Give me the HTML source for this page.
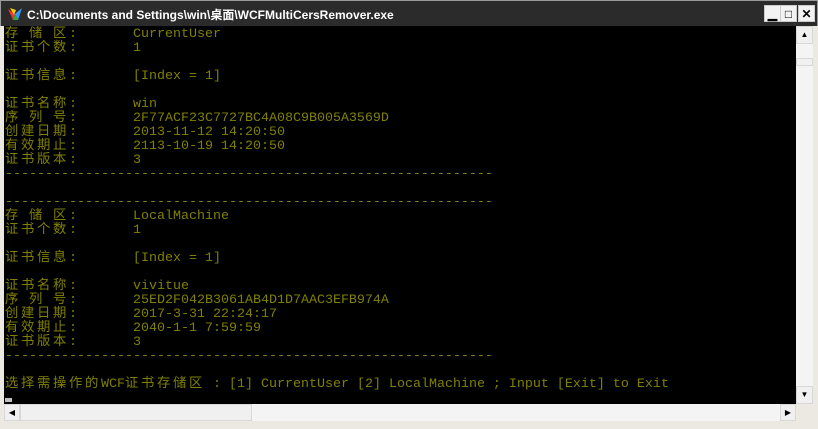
<!DOCTYPE html>
<html><head><meta charset="utf-8"><style>
*{margin:0;padding:0;box-sizing:border-box}
body{width:818px;height:429px;background:#ece9e2;position:relative;overflow:hidden;font-family:"Liberation Sans",sans-serif}
#title{position:absolute;left:0;top:0;width:818px;height:26px;background:#2b2b2b;border:1px solid #9a9a9a;border-bottom:none}
#title .t{position:absolute;left:26px;top:5px;color:#fff;font-weight:bold;font-size:12px;font-family:"Liberation Sans","Noto Sans CJK SC",sans-serif}
.btn{position:absolute;top:4px;width:17px;height:17px;background:#f2f2f2;border:1px solid #ccc;font-size:12px;font-weight:bold;text-align:center;line-height:16px;color:#000}
#con{position:absolute;left:4px;top:26px;width:792px;height:378px;background:#000;overflow:hidden}
pre{position:absolute;left:1px;top:2px;font-family:"Liberation Mono","Noto Sans CJK SC",monospace;font-size:13.33px;line-height:14px;color:#808000;white-space:pre}
i{font-style:normal;display:inline-block;width:16px;text-align:left}
#vs{position:absolute;left:796px;top:26px;width:17px;height:378px;background:#f4f4f4}
#hs{position:absolute;left:4px;top:404px;width:792px;height:17px;background:#f4f4f4}
.sb{position:absolute;background:#f0f0f0;border:1px solid #d8d8d8;font-size:8px;text-align:center;color:#000}
</style></head><body>
<div id="title"><svg style="position:absolute;left:6px;top:5px" width="16" height="16"><path d="M1 3 L6 14 L8 8Z" fill="#e33"/><path d="M6 14 L8 8 L11 14Z" fill="#3a3"/><path d="M8 8 L15 2 L11 14Z" fill="#39f"/><path d="M3 2 L7 9 L9 4Z" fill="#fc0"/></svg><span class="t">C:\Documents and Settings\win\桌面\WCFMultiCersRemover.exe</span>
<div class="btn" style="left:763px">&#9601;</div><div class="btn" style="left:779px">&#9633;</div><div class="btn" style="left:797px">✕</div></div>
<div id="con"><pre><i>存</i> <i>储</i> <i>区</i>:       CurrentUser
<i>证</i><i>书</i><i>个</i><i>数</i>:       1

<i>证</i><i>书</i><i>信</i><i>息</i>:       [Index = 1]

<i>证</i><i>书</i><i>名</i><i>称</i>:       win
<i>序</i> <i>列</i> <i>号</i>:       2F77ACF23C7727BC4A08C9B005A3569D
<i>创</i><i>建</i><i>日</i><i>期</i>:       2013-11-12 14:20:50
<i>有</i><i>效</i><i>期</i><i>止</i>:       2113-10-19 14:20:50
<i>证</i><i>书</i><i>版</i><i>本</i>:       3
-------------------------------------------------------------

-------------------------------------------------------------
<i>存</i> <i>储</i> <i>区</i>:       LocalMachine
<i>证</i><i>书</i><i>个</i><i>数</i>:       1

<i>证</i><i>书</i><i>信</i><i>息</i>:       [Index = 1]

<i>证</i><i>书</i><i>名</i><i>称</i>:       vivitue
<i>序</i> <i>列</i> <i>号</i>:       25ED2F042B3061AB4D1D7AAC3EFB974A
<i>创</i><i>建</i><i>日</i><i>期</i>:       2017-3-31 22:24:17
<i>有</i><i>效</i><i>期</i><i>止</i>:       2040-1-1 7:59:59
<i>证</i><i>书</i><i>版</i><i>本</i>:       3
-------------------------------------------------------------

<i>选</i><i>择</i><i>需</i><i>操</i><i>作</i><i>的</i>WCF<i>证</i><i>书</i><i>存</i><i>储</i><i>区</i> : [1] CurrentUser [2] LocalMachine ; Input [Exit] to Exit</pre>
<div style="position:absolute;left:1px;top:372px;width:7px;height:4px;background:#c0c0c0"></div></div>
<div id="vs"><div class="sb" style="left:0;top:0;width:17px;height:18px;line-height:16px">▲</div><div class="sb" style="left:0;top:32px;width:17px;height:8px"></div><div class="sb" style="left:0;top:360px;width:17px;height:18px;line-height:16px">▼</div></div>
<div id="hs"><div class="sb" style="left:0;top:0;width:16px;height:17px;line-height:15px">◀</div><div class="sb" style="left:16px;top:0;width:232px;height:17px"></div><div class="sb" style="left:776px;top:0;width:16px;height:17px;line-height:15px">▶</div></div>
</body></html>
